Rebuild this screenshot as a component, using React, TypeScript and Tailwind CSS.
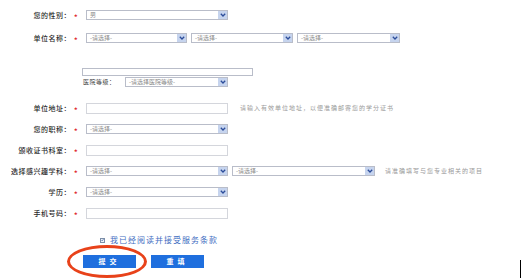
import React from "react";

const font = { fontFamily: '"Noto Sans CJK SC", "Noto Sans", sans-serif' };

function Select({ w, text = "-请选择-" }: { w: string; text?: string }) {
  return (
    <div className={`${w} flex h-[10px] items-center border border-[#b9bdc9] bg-white`}>
      <span className="flex-1 pl-[3px] text-[6px] leading-none text-[#8a8a8a]">{text}</span>
      <span className="flex h-full w-[9px] items-center justify-center bg-[#c6d4ee]">
        <svg width="6" height="4" viewBox="0 0 6 4">
          <path d="M0.8 0.8 L3 3 L5.2 0.8" fill="none" stroke="#2b4c9a" strokeWidth="1.3" />
        </svg>
      </span>
    </div>
  );
}

function Input({ w = "w-[142px]" }: { w?: string }) {
  return <div className={`${w} h-[11px] border border-[#d4d6dc] bg-white`} />;
}

function Row({ label, children }: { label: string; children: React.ReactNode }) {
  return (
    <div className="flex h-[12px] items-center">
      <div className="w-[71px] text-right text-[7px] font-medium leading-none tracking-[0.5px] text-[#2a2a2a]">{label}</div>
      <div className="w-[15px] translate-y-[2px] pl-[3px] text-[7px] font-bold leading-none text-[#e0222a]">*</div>
      {children}
    </div>
  );
}

export default function App() {
  return (
    <div className="relative h-[280px] w-[521px] overflow-hidden bg-white" style={font}>
      <div className="flex flex-col pt-[9px]">
        <Row label="您的性别：">
          <Select w="w-[142px]" text="男" />
        </Row>
        <div className="mt-[11px]">
          <Row label="单位名称：">
            <div className="flex gap-[4px]">
              <Select w="w-[101px]" />
              <Select w="w-[102px]" />
              <Select w="w-[103px]" />
            </div>
          </Row>
        </div>

        <div className="ml-[82px] mt-[24px] h-[8px] w-[171px] border border-[#b9bdc9] bg-white" />
        <div className="ml-[83px] mt-[1px] flex h-[10px] items-center">
          <span className="w-[42px] text-[6px] leading-none tracking-[0.5px] text-[#444]">医院等级：</span>
          <Select w="w-[103px]" text="-请选择医院等级-" />
        </div>

        <div className="mt-[15px] flex flex-col gap-[9px]">
          <Row label="单位地址：">
            <Input />
            <span className="ml-[12px] text-[6px] leading-none tracking-[1px] text-[#9a9a9a]">
              请输入有效单位地址，以便准确邮寄您的学分证书
            </span>
          </Row>
          <Row label="您的职称：">
            <Select w="w-[142px]" />
          </Row>
          <Row label="颁收证书科室：">
            <Input />
          </Row>
          <Row label="选择感兴趣学科：">
            <div className="flex items-center gap-[4px]">
              <Select w="w-[142px]" />
              <Select w="w-[143px]" />
            </div>
            <span className="ml-[10px] text-[6px] leading-none tracking-[1px] text-[#9a9a9a]">
              请准确填写与您专业相关的项目
            </span>
          </Row>
          <Row label="学历：">
            <Select w="w-[142px]" />
          </Row>
          <Row label="手机号码：">
            <Input />
          </Row>
        </div>

        <div className="ml-[100px] mt-[16px] flex h-[10px] items-center gap-[5px]">
          <span className="flex h-[5px] w-[5px] items-center justify-center border border-[#7d8fa8] bg-[#eef2f8]">
            <svg width="4" height="4" viewBox="0 0 4 4">
              <path d="M0.5 2 L1.6 3.2 L3.5 0.6" fill="none" stroke="#2f5a9e" strokeWidth="0.8" />
            </svg>
          </span>
          <span className="text-[8px] leading-none tracking-[1px] text-[#3f6ec2]">我已经阅读并接受服务条款</span>
        </div>

        <div className="ml-[83px] mt-[10px] flex gap-[15px]">
          <button className="h-[13px] w-[53px] bg-[#1f6fde] text-[7px] font-bold leading-none tracking-[4px] text-white">
            提交
          </button>
          <button className="h-[13px] w-[53px] bg-[#1f6fde] text-[7px] font-bold leading-none tracking-[4px] text-white">
            重填
          </button>
        </div>
      </div>

      <div className="absolute left-[67px] top-[245px] h-[33px] w-[80px] rounded-[50%] border-[3px] border-[#e8421a]" />
      <div className="absolute left-[520px] top-[260px] h-[18px] w-[1px] bg-black" />
    </div>
  );
}
